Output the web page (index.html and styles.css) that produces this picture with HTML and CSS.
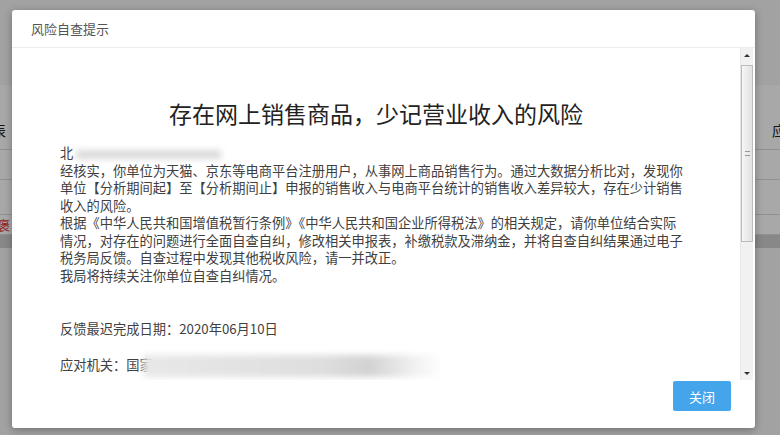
FILE: index.html
```html
<!DOCTYPE html>
<html lang="zh-CN">
<head>
    <meta charset="UTF-8">
    <meta name="viewport" content="width=device-width, initial-scale=1.0">
    <title>风险自查提示</title>
    <link rel="stylesheet" href="styles.css">
</head>
<body>
    <!-- page behind the dialog -->
    <div class="page">
        <div class="row row-head"><span class="cell-l">表</span><span class="cell-r">应</span></div>
        <div class="row row-2"></div>
        <div class="row row-3"></div>
        <div class="row row-4"><span class="cell-warn">褒</span></div>
        <div class="band"></div>
    </div>
    <div class="mask"></div>

    <div class="modal">
        <div class="modal-header">风险自查提示</div>
        <div class="modal-body">
            <div class="content">
                <h1 class="title">存在网上销售商品，少记营业收入的风险</h1>
                <div class="letter">
                    <div class="line">北<span class="redact"></span></div>
                    <div class="line">经核实，你单位为天猫、京东等电商平台注册用户，从事网上商品销售行为。通过大数据分析比对，发现你</div>
                    <div class="line">单位【分析期间起】至【分析期间止】申报的销售收入与电商平台统计的销售收入差异较大，存在少计销售</div>
                    <div class="line">收入的风险。</div>
                    <div class="line">根据《中华人民共和国增值税暂行条例》《中华人民共和国企业所得税法》的相关规定，请你单位结合实际</div>
                    <div class="line">情况，对存在的问题进行全面自查自纠，修改相关申报表，补缴税款及滞纳金，并将自查自纠结果通过电子</div>
                    <div class="line">税务局反馈。自查过程中发现其他税收风险，请一并改正。</div>
                    <div class="line">我局将持续关注你单位自查自纠情况。</div>
                </div>
                <div class="line deadline">反馈最迟完成日期：2020年06月10日</div>
                <div class="line office">应对机关：国家<span class="redact redact-wide"></span></div>
            </div>
            <div class="scrollbar">
                <div class="sb-btn"><span class="arrow-up"></span></div>
                <div class="sb-thumb"><span class="grip"></span></div>
                <div class="sb-track"></div>
                <div class="sb-btn"><span class="arrow-down"></span></div>
            </div>
        </div>
        <div class="modal-footer">
            <button class="btn-close">关闭</button>
        </div>
    </div>
</body>
</html>
```

FILE: styles.css
```css
* {
    box-sizing: border-box;
}

body {
    margin: 0;
    width: 780px;
    height: 435px;
    overflow: hidden;
    position: relative;
    background: #f6f6f6;
    font-family: "Noto Sans CJK SC", "Microsoft YaHei", sans-serif;
}

/* background page */
.page {
    display: flex;
    flex-direction: column;
    padding-top: 85px;
}

.row {
    display: flex;
    justify-content: space-between;
    align-items: center;
    border-bottom: 1px solid #dcdcdc;
    background: #fff;
    font-size: 14px;
    color: #222;
}

.row-head {
    height: 65px;
    padding-top: 26px;
}

.row-2 {
    height: 30px;
}

.row-3 {
    height: 35px;
}

.row-4 {
    height: 20px;
}

.cell-l {
    margin-left: -8px;
}

.cell-r {
    margin-right: -6px;
}

.cell-warn {
    margin-left: -3px;
    color: #e0302f;
    font-size: 13px;
}

.band {
    height: 13px;
    background: #cfcfcf;
}

.mask {
    position: absolute;
    inset: 0;
    background: rgba(0, 0, 0, 0.34);
}

/* dialog */
.modal {
    position: absolute;
    left: 12px;
    top: 10px;
    width: 743px;
    height: 418px;
    background: #fff;
    border-radius: 3px;
    box-shadow: 0 2px 8px rgba(0, 0, 0, 0.3);
    display: flex;
    flex-direction: column;
}

.modal-header {
    height: 38px;
    padding-left: 19px;
    display: flex;
    align-items: center;
    font-size: 13px;
    color: #555;
    border-bottom: 1px solid #ececec;
}

.modal-body {
    height: 332px;
    display: flex;
    padding-right: 2px;
}

.content {
    flex: 1;
    padding-top: 50px;
    overflow: hidden;
    color: #404040;
}

.title {
    margin: 0;
    text-align: center;
    font-size: 23px;
    line-height: 30px;
    font-weight: normal;
    color: #222;
}

.letter {
    margin-top: 16px;
}

.line {
    padding-left: 48px;
    font-size: 13.25px;
    line-height: 17.5px;
    white-space: nowrap;
}

.deadline {
    margin-top: 36px;
}

.office {
    margin-top: 17.5px;
}

.redact {
    display: inline-block;
    width: 145px;
    height: 9px;
    margin-left: 3px;
    vertical-align: middle;
    background: #dadada;
    filter: blur(3px);
}

.redact-wide {
    width: 300px;
    height: 22px;
    margin-left: -10px;
    background: linear-gradient(to right, #e8e8e8, #dedede 60%, #d2d2d2 75%, #f0f0f0 90%, #fff);
}

/* fake scrollbar */
.scrollbar {
    width: 13px;
    display: flex;
    flex-direction: column;
    background: #f1f1f1;
    border-left: 1px solid #e6e6e6;
}

.sb-btn {
    height: 14px;
    display: flex;
    align-items: center;
    justify-content: center;
}

.arrow-up {
    border: 3px solid transparent;
    border-bottom: 3px solid #333;
    border-top: 0;
}

.arrow-down {
    border: 3px solid transparent;
    border-top: 3px solid #333;
    border-bottom: 0;
}

.sb-thumb {
    margin-top: 3px;
    height: 177px;
    border: 1px solid #bcbcbc;
    background: linear-gradient(to right, #f6f6f6, #e1e1e1);
    display: flex;
    align-items: center;
    justify-content: center;
}

.grip {
    width: 5px;
    height: 5px;
    border-top: 1px solid #999;
    border-bottom: 1px solid #999;
}

.sb-track {
    flex: 1;
}

.modal-footer {
    height: 48px;
    display: flex;
    justify-content: flex-end;
    padding: 1px 24px 0 0;
}

.btn-close {
    width: 58px;
    height: 30px;
    border: none;
    border-radius: 2px;
    background: #45a5ea;
    color: #fff;
    font-family: inherit;
    font-size: 13px;
    cursor: pointer;
}
```
